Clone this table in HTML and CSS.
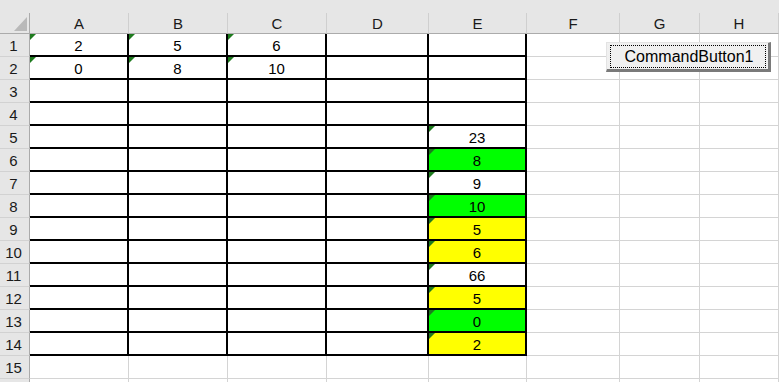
FILE: index.html
```html
<!DOCTYPE html>
<html>
<head>
<meta charset="utf-8">
<link rel="stylesheet" href="styles.css">
</head>
<body>
<div class="topband"></div>
<div class="sheet">
  <div class="corner"><span class="corner-tri"></span></div>
  <div class="ch">A</div><div class="ch">B</div><div class="ch">C</div><div class="ch">D</div><div class="ch">E</div><div class="ch">F</div><div class="ch">G</div><div class="ch">H</div>

  <div class="rh">1</div>
  <div class="c t ind">2</div><div class="c t ind">5</div><div class="c t ind">6</div><div class="c t"></div><div class="c t"></div><div class="c"></div><div class="c"></div><div class="c"></div>

  <div class="rh">2</div>
  <div class="c t ind">0</div><div class="c t ind">8</div><div class="c t ind">10</div><div class="c t"></div><div class="c t"></div><div class="c"></div><div class="c"></div><div class="c"></div>

  <div class="rh">3</div>
  <div class="c t"></div><div class="c t"></div><div class="c t"></div><div class="c t"></div><div class="c t"></div><div class="c"></div><div class="c"></div><div class="c"></div>

  <div class="rh">4</div>
  <div class="c t"></div><div class="c t"></div><div class="c t"></div><div class="c t"></div><div class="c t"></div><div class="c"></div><div class="c"></div><div class="c"></div>

  <div class="rh">5</div>
  <div class="c t"></div><div class="c t"></div><div class="c t"></div><div class="c t"></div><div class="c t ind">23</div><div class="c"></div><div class="c"></div><div class="c"></div>

  <div class="rh">6</div>
  <div class="c t"></div><div class="c t"></div><div class="c t"></div><div class="c t"></div><div class="c t ind green">8</div><div class="c"></div><div class="c"></div><div class="c"></div>

  <div class="rh">7</div>
  <div class="c t"></div><div class="c t"></div><div class="c t"></div><div class="c t"></div><div class="c t ind">9</div><div class="c"></div><div class="c"></div><div class="c"></div>

  <div class="rh">8</div>
  <div class="c t"></div><div class="c t"></div><div class="c t"></div><div class="c t"></div><div class="c t ind green">10</div><div class="c"></div><div class="c"></div><div class="c"></div>

  <div class="rh">9</div>
  <div class="c t"></div><div class="c t"></div><div class="c t"></div><div class="c t"></div><div class="c t ind yellow">5</div><div class="c"></div><div class="c"></div><div class="c"></div>

  <div class="rh">10</div>
  <div class="c t"></div><div class="c t"></div><div class="c t"></div><div class="c t"></div><div class="c t ind yellow">6</div><div class="c"></div><div class="c"></div><div class="c"></div>

  <div class="rh">11</div>
  <div class="c t"></div><div class="c t"></div><div class="c t"></div><div class="c t"></div><div class="c t ind">66</div><div class="c"></div><div class="c"></div><div class="c"></div>

  <div class="rh">12</div>
  <div class="c t"></div><div class="c t"></div><div class="c t"></div><div class="c t"></div><div class="c t ind yellow">5</div><div class="c"></div><div class="c"></div><div class="c"></div>

  <div class="rh">13</div>
  <div class="c t"></div><div class="c t"></div><div class="c t"></div><div class="c t"></div><div class="c t ind green">0</div><div class="c"></div><div class="c"></div><div class="c"></div>

  <div class="rh">14</div>
  <div class="c t"></div><div class="c t"></div><div class="c t"></div><div class="c t"></div><div class="c t ind yellow">2</div><div class="c"></div><div class="c"></div><div class="c"></div>

  <div class="rh">15</div>
  <div class="c"></div><div class="c"></div><div class="c"></div><div class="c"></div><div class="c"></div><div class="c"></div><div class="c"></div><div class="c"></div>

  <div class="rh"></div>
  <div class="c"></div><div class="c"></div><div class="c"></div><div class="c"></div><div class="c"></div><div class="c"></div><div class="c"></div><div class="c"></div>
</div>

<button class="cmd" type="button"><span class="cmd-focus">CommandButton1</span></button>
</body>
</html>
```

FILE: styles.css
```css
html, body {
  margin: 0;
  padding: 0;
  background: #ffffff;
  overflow: hidden;
  width: 779px;
  height: 382px;
  font-family: "Liberation Sans", Arial, sans-serif;
  color: #000;
}

.topband {
  height: 13px;
  background: #e6e6e6;
}

.sheet {
  display: grid;
  grid-template-columns: 30px 99px 99px 99px 102px 98px 93px 80px 79px;
  grid-template-rows: 21px;
  grid-auto-rows: 23px;
  width: 779px;
}

.corner {
  box-sizing: border-box;
  background: #e6e6e6;
  border-right: 1px solid #ababab;
  border-bottom: 1px solid #ababab;
  display: flex;
  justify-content: flex-end;
  align-items: flex-end;
  padding: 0 2px 2px 0;
}

.corner-tri {
  width: 13px;
  height: 14px;
  background: #b9b9b9;
  clip-path: polygon(100% 0, 100% 100%, 0 100%);
}

.ch {
  box-sizing: border-box;
  background: #e6e6e6;
  border-right: 1px solid #cfcfcf;
  border-bottom: 1px solid #ababab;
  display: flex;
  align-items: center;
  justify-content: center;
  font-size: 15px;
  color: #1a1a1a;
  padding-top: 1px;
}

.rh {
  box-sizing: border-box;
  background: #e6e6e6;
  border-right: 1px solid #ababab;
  border-bottom: 1px solid #d2d2d2;
  display: flex;
  align-items: center;
  justify-content: center;
  font-size: 15px;
  color: #1a1a1a;
  padding-right: 2px;
  padding-top: 1px;
}

.c {
  box-sizing: border-box;
  border-right: 1px solid #d4d4d4;
  border-bottom: 1px solid #d4d4d4;
  display: flex;
  align-items: center;
  justify-content: center;
  font-size: 15px;
  position: relative;
  padding-top: 1px;
}

.t {
  border-right: 2px solid #000;
  border-bottom: 2px solid #000;
}

.ind::before {
  content: "";
  position: absolute;
  left: 0;
  top: 0;
  width: 6px;
  height: 6px;
  background: #1e7b1e;
  clip-path: polygon(0 0, 100% 0, 0 100%);
}

.green { background: #00ff00; }
.yellow { background: #ffff00; }

.cmd {
  position: absolute;
  left: 606px;
  top: 42px;
  width: 165px;
  height: 30px;
  box-sizing: border-box;
  margin: 0;
  padding: 2px 2px 1px 3px;
  background: #f0f0f0;
  border-style: solid;
  border-width: 1px 3px 3px 1px;
  border-color: #e3e3e3 #7a7a7a #7a7a7a #e3e3e3;
  font-family: "Liberation Sans", Arial, sans-serif;
  font-size: 16px;
  color: #000;
  display: flex;
}

.cmd-focus {
  flex: 1;
  border: 1px dotted #000;
  display: flex;
  align-items: center;
  justify-content: center;
  padding-left: 2px;
}
```
